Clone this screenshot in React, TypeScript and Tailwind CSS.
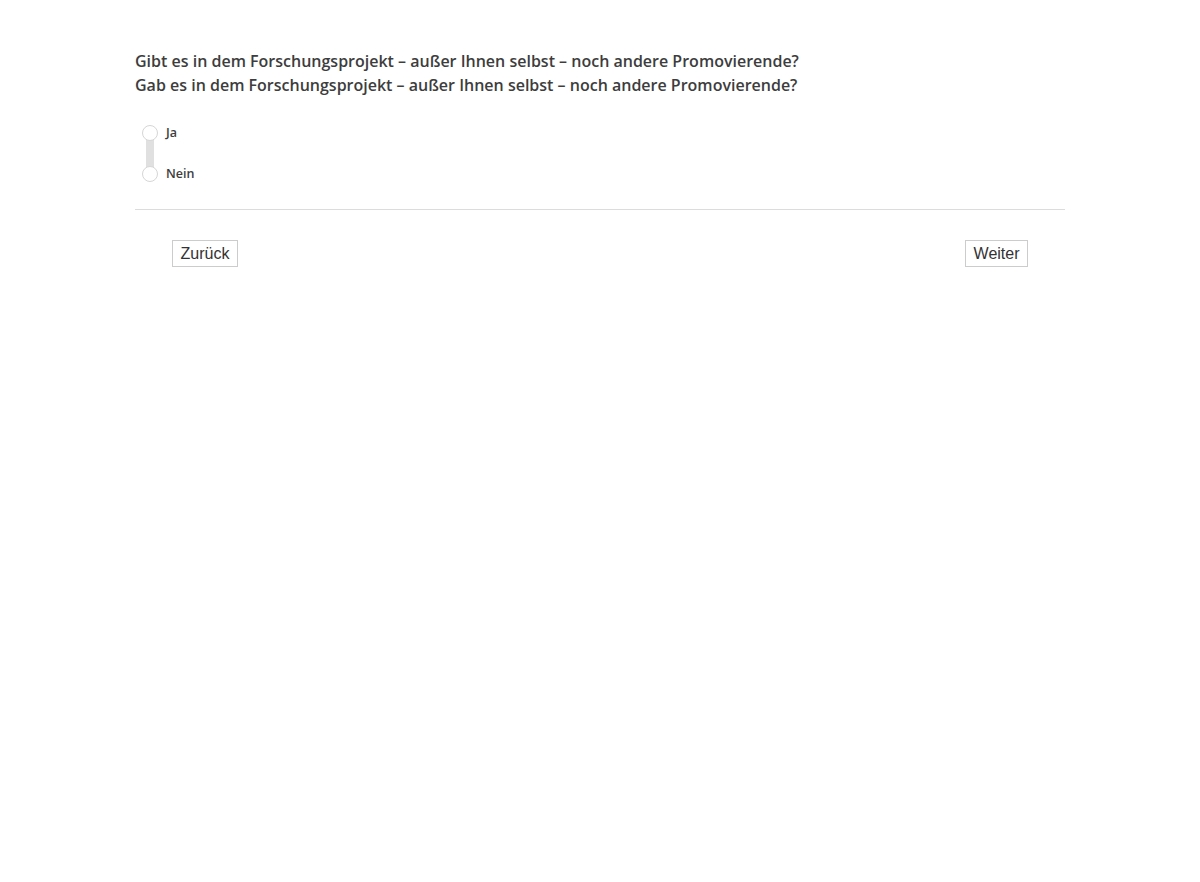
const options = ["Ja", "Nein"];

export default function App() {
  return (
    <div className="min-h-screen bg-white" style={{ fontFamily: "'Open Sans', sans-serif" }}>
      <div className="mx-auto w-[930px] pt-[49px]">
        <h1 className="text-[16px] leading-[24px] font-semibold text-[#3d3d3d]">
          Gibt es in dem Forschungsprojekt – außer Ihnen selbst – noch andere Promovierende?
          <br />
          Gab es in dem Forschungsprojekt – außer Ihnen selbst – noch andere Promovierende?
        </h1>

        <div className="relative mt-[28px] ml-[7px] flex flex-col gap-[25px]">
          <div className="absolute left-[4px] top-[10px] h-[34px] w-[8px] bg-[#e0e0e0]" />
          {options.map((o) => (
            <label key={o} className="relative flex items-center gap-[8px] h-[16px]">
              <span className="h-[16px] w-[16px] rounded-full border border-[#d6d6d6] bg-white" />
              <span className="text-[12.5px] font-semibold text-[#3d3d3d]">{o}</span>
            </label>
          ))}
        </div>

        <div className="mt-[27px] border-t border-[#dcdcdc]" />

        <div
          className="flex justify-between px-[37px] pt-[30px]"
          style={{ fontFamily: "'Liberation Sans', Arial, sans-serif" }}
        >
          <button className="h-[27px] border border-[#cccccc] bg-white px-[7.5px] text-[16px] text-[#333]">
            Zurück
          </button>
          <button className="h-[27px] border border-[#cccccc] bg-white px-[7.5px] text-[16px] text-[#333]">
            Weiter
          </button>
        </div>
      </div>
    </div>
  );
}
